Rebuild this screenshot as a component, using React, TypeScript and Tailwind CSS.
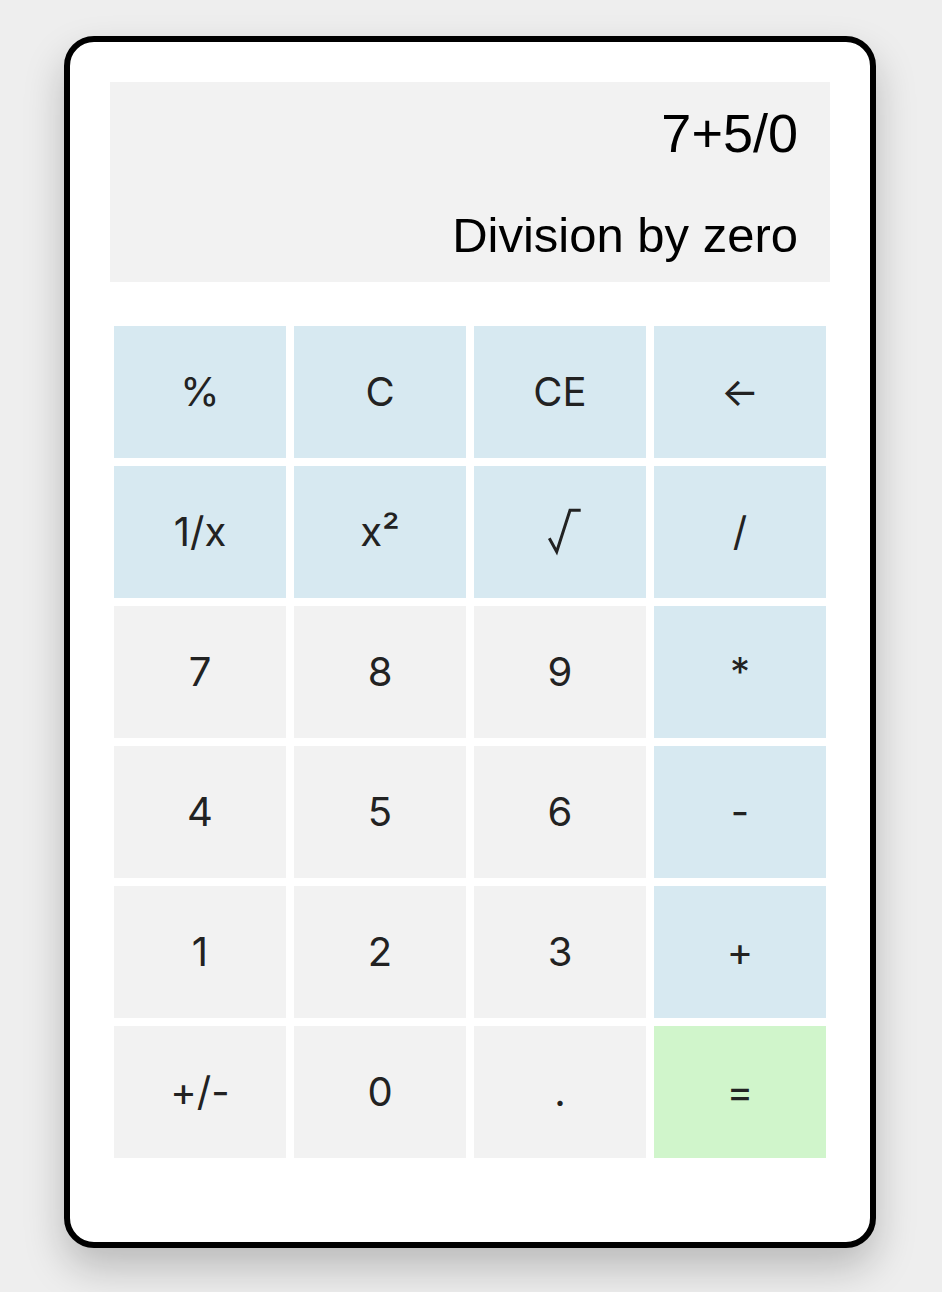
import React from "react";

type Btn = { label: string; kind: "op" | "num" | "eq" };

const buttons: Btn[] = [
  { label: "%", kind: "op" },
  { label: "C", kind: "op" },
  { label: "CE", kind: "op" },
  { label: "←", kind: "op" },
  { label: "1/x", kind: "op" },
  { label: "x²", kind: "op" },
  { label: "√", kind: "op" },
  { label: "/", kind: "op" },
  { label: "7", kind: "num" },
  { label: "8", kind: "num" },
  { label: "9", kind: "num" },
  { label: "*", kind: "op" },
  { label: "4", kind: "num" },
  { label: "5", kind: "num" },
  { label: "6", kind: "num" },
  { label: "-", kind: "op" },
  { label: "1", kind: "num" },
  { label: "2", kind: "num" },
  { label: "3", kind: "num" },
  { label: "+", kind: "op" },
  { label: "+/-", kind: "num" },
  { label: "0", kind: "num" },
  { label: ".", kind: "num" },
  { label: "=", kind: "eq" },
];

function bgFor(kind: Btn["kind"]) {
  if (kind === "op") return "bg-[#d7e9f1]";
  if (kind === "eq") return "bg-[#d0f5cb]";
  return "bg-[#f2f2f2]";
}

function SqrtIcon() {
  return (
    <svg width="42" height="48" viewBox="0 0 42 48" aria-label="√">
      <path
        d="M10.3 30.3 L17.7 43.7 L31 2.2 L41.7 2.2"
        fill="none"
        stroke="#222222"
        strokeWidth="3"
        strokeLinejoin="miter"
        strokeLinecap="butt"
      />
    </svg>
  );
}

export default function App() {
  return (
    <div className="min-h-[1292px] w-full bg-[#eeeeee] pt-[36px]">
      <div className="ml-[64px] w-[812px] rounded-[30px] border-[6px] border-black bg-white px-[40px] pt-[40px] pb-[80px] shadow-[0_20px_40px_rgba(0,0,0,0.22)]">
        <div
          className="flex h-[200px] flex-col items-end bg-[#f2f2f2] pr-[32px] pt-[16px] text-black"
          style={{ fontFamily: '"Liberation Sans", Arial, sans-serif' }}
        >
          <div className="text-[54px] leading-[70px]">7+5/0</div>
          <div className="mt-[35px] text-[49px] leading-[64px]">Division by zero</div>
        </div>
        <div
          className="mt-[40px] grid grid-cols-4 gap-[8px] p-[4px]"
          style={{ fontFamily: 'Inter, "Noto Sans", sans-serif' }}
        >
          {buttons.map((b, i) => (
            <div
              key={i}
              className={`flex h-[132px] items-center justify-center text-[40px] text-[#222222] ${bgFor(b.kind)}`}
            >
              {b.label === "√" ? <SqrtIcon /> : b.label}
            </div>
          ))}
        </div>
      </div>
    </div>
  );
}
